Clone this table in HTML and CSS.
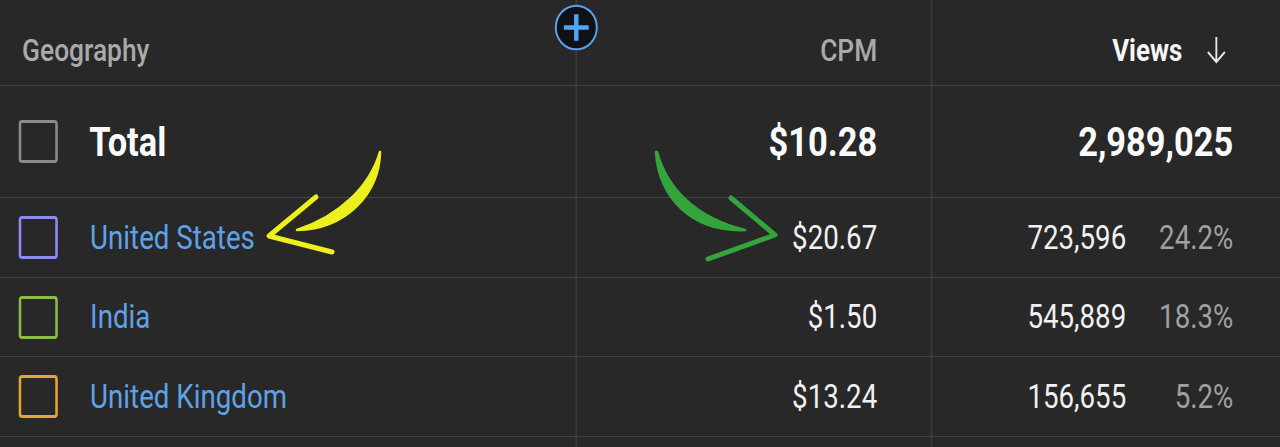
FILE: index.html
```html
<!DOCTYPE html>
<html lang="en">
<head>
<meta charset="utf-8">
<title>Geography table</title>
<link rel="stylesheet" href="styles.css">
</head>
<body>
<div class="frame">
<div class="table">
  <div class="row head">
    <div class="cell geo"><span class="head-label">Geography</span></div>
    <div class="cell num cpm">
      <span class="add-btn">
        <svg viewBox="0 0 50 50" width="52" height="47" preserveAspectRatio="none"><circle cx="25" cy="25" r="23.2" fill="#0e1115" stroke="#5aa2ea" stroke-width="2.2"/><path d="M25 13.5v23M13.5 25h23" stroke="#4ea6f8" stroke-width="5" stroke-linecap="square"/></svg>
      </span>
      <span class="head-label">CPM</span>
    </div>
    <div class="cell num views">
      <span class="head-label active">Views</span>
      <svg class="sort" viewBox="0 0 26 28" width="26" height="28"><path d="M13 1v25M3 16l10 10 10-10" fill="none" stroke="#e8e8e8" stroke-width="2.2"/></svg>
    </div>
  </div>

  <div class="row total">
    <div class="cell geo"><span class="cb cb-gray"></span><span class="name-total">Total</span></div>
    <div class="cell num cpm"><span class="big">$10.28</span></div>
    <div class="cell num views"><span class="big">2,989,025</span></div>
  </div>

  <div class="row r1">
    <div class="cell geo"><span class="cb cb-purple"></span><span class="name">United States</span></div>
    <div class="cell num cpm"><span class="val">$20.67</span></div>
    <div class="cell num views"><span class="val">723,596</span><span class="pct">24.2%</span></div>
  </div>

  <div class="row r2">
    <div class="cell geo"><span class="cb cb-green"></span><span class="name">India</span></div>
    <div class="cell num cpm"><span class="val">$1.50</span></div>
    <div class="cell num views"><span class="val">545,889</span><span class="pct">18.3%</span></div>
  </div>

  <div class="row r3">
    <div class="cell geo"><span class="cb cb-orange"></span><span class="name">United Kingdom</span></div>
    <div class="cell num cpm"><span class="val">$13.24</span></div>
    <div class="cell num views"><span class="val">156,655</span><span class="pct">5.2%</span></div>
  </div>

  <div class="row r4">
    <div class="cell geo"></div>
    <div class="cell num cpm"></div>
    <div class="cell num views"></div>
  </div>
</div>
</div>

<svg class="marks" viewBox="0 0 1280 447" width="1280" height="447">
  <g fill="#eef01e" stroke="#eef01e" stroke-linecap="round" stroke-linejoin="round" stroke-width="2.6">
    <path d="M380 152 C379 194 346 229 297 230 C340 216 370 186 380 152 Z"/>
  </g>
  <g fill="none" stroke="#eef01e" stroke-linecap="round" stroke-linejoin="round" stroke-width="5">
    <path d="M316 197 L269 236 L332 252"/>
  </g>
  <g fill="#34a43c" stroke="#34a43c" stroke-linecap="round" stroke-linejoin="round" stroke-width="2.6">
    <path d="M656 152 C659 198 692 232 745 230 C695 218 667 188 657 152 Z"/>
  </g>
  <g fill="none" stroke="#34a43c" stroke-linecap="round" stroke-linejoin="round" stroke-width="5">
    <path d="M731 198 L775 235 L708 259"/>
  </g>
</svg>
</body>
</html>
```

FILE: styles.css
```css
html, body {
  margin: 0;
  padding: 0;
  background: #282828;
}

body {
  position: relative;
  width: 1280px;
  height: 447px;
  overflow: hidden;
  font-family: Roboto, "Noto Sans", "Liberation Sans", sans-serif;
  color: #f1f1f1;
}

.frame {
  width: 1280px;
  height: 447px;
  overflow: hidden;
}

.table {
  width: 1506px;
  transform: scaleX(0.85);
  transform-origin: 0 0;
}

.row {
  display: grid;
  grid-template-columns: 677px 418px 1fr;
  border-bottom: 1px solid #414141;
  box-sizing: border-box;
}

.head { height: 86px; }
.total { height: 112px; }
.r1 { height: 80px; }
.r2 { height: 79px; }
.r3 { height: 80px; }
.r4 { height: 10px; border-bottom: none; }

.cell {
  display: flex;
  align-items: center;
  box-sizing: border-box;
}

.geo {
  padding-left: 22px;
}

.num {
  justify-content: flex-end;
  border-left: 2px solid #3a3a3a;
}

.cpm {
  padding-right: 63px;
  position: relative;
}

.views {
  padding-right: 55px;
}

.head .cell {
  padding-top: 16px;
}

.head .geo {
  padding-left: 26px;
}

.head .views {
  padding-right: 62px;
}

.head-label {
  font-size: 31px;
  font-weight: 500;
  color: #aaaaaa;
}

.head-label.active {
  color: #f6f6f6;
  font-weight: 700;
  font-size: 30.5px;
}

.sort {
  margin-left: 27px;
  margin-top: -2px;
}

.add-btn {
  position: absolute;
  left: -27px;
  top: 4px;
  width: 52px;
  height: 47px;
  display: flex;
}

.cb {
  width: 46px;
  height: 43px;
  box-sizing: border-box;
  border: 3px solid #8a8a8a;
  border-radius: 4px;
  flex: none;
}

.cb-gray { border-color: #8b8b8b; }
.cb-purple { border-color: #8c8cf2; }
.cb-green { border-color: #87bd45; }
.cb-orange { border-color: #eca232; }

.name-total {
  margin-left: 37px;
  font-size: 40.5px;
  font-weight: 700;
  color: #fafafa;
}

.name {
  margin-left: 38px;
  font-size: 32.6px;
  color: #5ea2ea;
}

.big {
  font-size: 40.5px;
  font-weight: 700;
  color: #fafafa;
}

.val {
  font-size: 32.6px;
  color: #f1f1f1;
}

.pct {
  width: 126px;
  text-align: right;
  font-size: 32.6px;
  color: #a0a0a0;
}

.marks {
  position: absolute;
  left: 0;
  top: 0;
  pointer-events: none;
}
```
